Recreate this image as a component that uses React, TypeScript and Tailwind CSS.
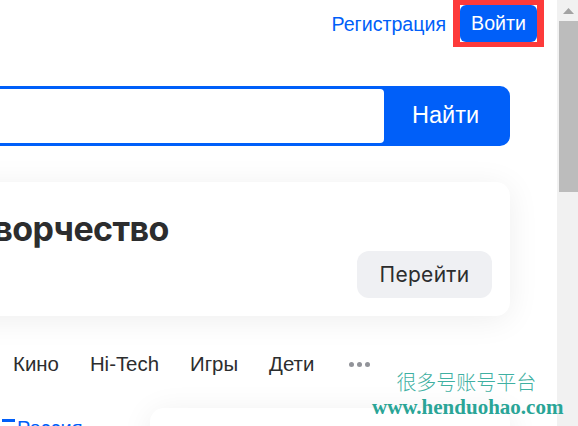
const navItems = ["Кино", "Hi-Tech", "Игры", "Дети"];

const App: React.FC = () => {
  return (
    <div className="relative flex h-[426px] w-[578px] overflow-hidden bg-white font-['Liberation_Sans',Arial,sans-serif] text-[#2c2d2e]">
      <div className="relative w-[557px] shrink-0 overflow-hidden">
        {/* header */}
        <div className="flex h-[47px] items-center justify-end gap-[7px] pr-[13px]">
          <a className="text-[19.6px] leading-6 text-[#005ff9]">Регистрация</a>
          <div className="border-x-[7px] border-y-[5px] border-[#fd3a3a] bg-white">
            <button className="flex h-[37px] w-[77px] items-center justify-center rounded-[6px] bg-[#005ff9] text-[19.6px] text-white">
              Войти
            </button>
          </div>
        </div>

        {/* search */}
        <div className="ml-[-100px] mr-[47px] mt-[39px] flex h-[60px] rounded-[10px] border-[3px] border-[#005ff9] bg-[#005ff9]">
          <input className="min-w-0 flex-1 rounded-[4px] bg-white outline-none" />
          <button className="flex w-[123px] items-center justify-center text-[23.5px] text-white">Найти</button>
        </div>

        {/* card */}
        <div className="ml-[-60px] mr-[47px] mt-[36px] flex h-[134px] flex-col rounded-[14px] bg-white pl-[33px] pr-[18px] pt-[27px] pb-[18px] shadow-[0_4px_32px_rgba(0,0,0,0.07)]">
          <h2 className="font-['Inter',sans-serif] text-[34px] font-bold leading-[40px] tracking-[-0.6px]">Творчество</h2>
          <button className="mt-[2px] flex h-[47px] w-[135px] items-center justify-center self-end rounded-[12px] bg-[#eff0f3] font-['Inter',sans-serif] text-[21px] font-normal tracking-[0.3px]">
            Перейти
          </button>
        </div>

        {/* nav */}
        <nav className="mt-[36px] flex items-center gap-[31px] pl-[13px] text-[20.4px] leading-6">
          {navItems.map(item => (
            <a key={item}>{item}</a>
          ))}
          <span className="ml-[4px] flex gap-[3px]">
            <i className="h-[5px] w-[5px] rounded-full bg-[#919399]" />
            <i className="h-[5px] w-[5px] rounded-full bg-[#919399]" />
            <i className="h-[5px] w-[5px] rounded-full bg-[#919399]" />
          </span>
        </nav>

        {/* bottom row */}
        <div className="mt-[32px] flex">
          <div className="flex w-[150px] shrink-0 items-start pt-[8px]">
            <span className="ml-[2px] mt-[3px] h-[3px] w-[13px] bg-[#005ff9]" />
            <a className="ml-[2px] text-[20px] leading-6 text-[#005ff9]">Россия</a>
            <svg className="ml-[14px] mt-[12px]" width="8" height="6" viewBox="0 0 8 6">
              <path d="M1 1l3 3 3-3" fill="none" stroke="#bcd3f5" strokeWidth="2" />
            </svg>
          </div>
          <div className="mr-[47px] h-[60px] flex-1 rounded-[14px] bg-white shadow-[0_4px_32px_rgba(0,0,0,0.07)]" />
        </div>
      </div>

      {/* scrollbar */}
      <div className="flex w-[21px] flex-col bg-[#f1f1f1] pl-[2px]">
        <div className="flex h-[21px] items-center justify-center">
          <svg width="11" height="6" viewBox="0 0 11 6">
            <path d="M5.5 0L11 6H0z" fill="#a3a3a3" />
          </svg>
        </div>
        <div className="h-[171px] bg-[#bcbcbc]" />
      </div>

      {/* watermark */}
      <div className="absolute left-[372px] top-[370px] flex flex-col items-end">
        <span className="mr-[27px] font-['Noto_Sans_CJK_SC',sans-serif] text-[20px] font-light leading-6 text-[#3fb0a2]">很多号账号平台</span>
        <span className="mt-[1px] font-['Liberation_Serif',serif] text-[21px] font-bold leading-6 text-[#2aa597]">www.henduohao.com</span>
      </div>
    </div>
  );
};

export default App;
